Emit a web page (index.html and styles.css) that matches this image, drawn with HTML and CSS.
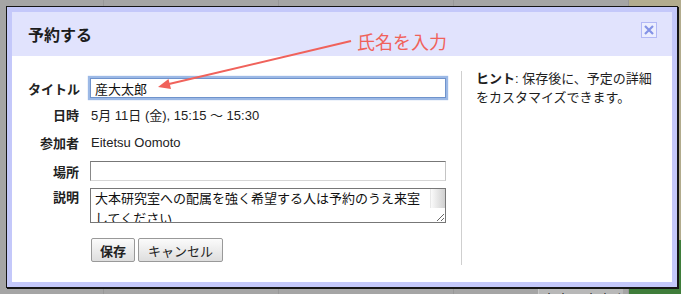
FILE: index.html
```html
<!DOCTYPE html>
<html lang="ja">
<head>
    <meta charset="UTF-8">
    <title>予約する</title>
    <link rel="stylesheet" href="styles.css">
</head>
<body>
    <div class="calendar">
        <div class="col col-first"></div>
        <div class="col"></div>
        <div class="col"></div>
        <div class="col">
            <div class="event">大本研究室説明会</div>
        </div>
        <div class="col col-last">
            <div class="event-green"></div>
        </div>
    </div>

    <div class="dialog">
        <div class="dialog-head">
            <h1 class="dialog-title">予約する</h1>
            <span class="close">
                <svg width="14" height="14" viewBox="0 0 14 14">
                    <path d="M3 3 L11 11 M11 3 L3 11" stroke="#8493e6" stroke-width="2.2" fill="none"/>
                </svg>
            </span>
        </div>
        <div class="dialog-body">
            <form class="form">
                <div class="rows">
                    <label class="label" for="title">タイトル</label>
                    <input class="field is-focus" id="title" type="text" value="産大太郎">

                    <span class="label">日時</span>
                    <span class="value">5月 11日 (金), 15:15 〜 15:30</span>

                    <span class="label">参加者</span>
                    <span class="value">Eitetsu Oomoto</span>

                    <label class="label" for="place">場所</label>
                    <input class="field" id="place" type="text">

                    <label class="label label-top" for="desc">説明</label>
                    <div class="memo-wrap">
                        <textarea class="field memo" id="desc">大本研究室への配属を強く希望する人は予約のうえ来室してください</textarea>
                    </div>
                </div>
                <div class="buttons">
                    <button type="button" class="btn btn-save">保存</button>
                    <button type="button" class="btn">キャンセル</button>
                </div>
            </form>
            <div class="hint">
                <p><b>ヒント</b>: 保存後に、予定の詳細をカスタマイズできます。</p>
            </div>
        </div>

        <!-- 注釈 -->
        <div class="note">氏名を入力</div>
        <svg class="arrow" width="210" height="60" viewBox="0 0 210 60">
            <line x1="201" y1="7" x2="19" y2="50" stroke="#f0625b" stroke-width="2"/>
            <polygon points="8,53 21,55 18.5,45" fill="#f0625b"/>
        </svg>
    </div>
</body>
</html>
```

FILE: styles.css
```css
body {
    margin: 0;
    font-family: "Liberation Sans", "Noto Sans CJK JP", sans-serif;
    font-size: 13px;
    color: #222;
    background-color: #a5a5a5;
    overflow: hidden;
}
.calendar {
    display: flex;
    height: 294px;
}
.col {
    width: 174px;
    border-right: 1px solid #989898;
    display: flex;
    flex-direction: column;
}
.col-first {
    width: 103px;
}
.col-last {
    flex: 1;
    border-right: none;
    background-color: #b2ac8e;
}
.event {
    margin: 287px 0 0 84px;
    width: 85px;
    height: 20px;
    box-sizing: border-box;
    padding: 2px 3px;
    background-color: #b8b8b8;
    border-left: 1px solid #c8c8c8;
    color: #2a2a2a;
    font-size: 14px;
    white-space: nowrap;
    overflow: hidden;
}
.event-green {
    margin-top: 240px;
    flex: 1;
    background-color: #3f7d3a;
}
.dialog {
    position: absolute;
    left: 6px;
    top: 6px;
    width: 660px;
    height: 270px;
    padding: 5px;
    background-color: #c4c8fa;
    border: 1px solid #151515;
    box-shadow: 1px 1px 0 #151515;
}
.dialog-head {
    display: flex;
    justify-content: space-between;
    align-items: center;
    height: 44px;
    padding: 0 15px 0 16px;
    background-color: #e1e3fd;
}
.dialog-title {
    margin: 0;
    font-size: 16px;
    font-weight: bold;
    color: #1c1c1c;
}
.close {
    align-self: flex-start;
    margin-top: 10px;
    width: 14px;
    height: 14px;
    display: flex;
    border: 1px solid #b3b9f5;
    background-color: #eceefe;
}
.dialog-body {
    display: flex;
    align-items: flex-start;
    height: 226px;
    background-color: #fff;
}
.form {
    width: 433px;
    padding: 20px 0 0 16px;
}
.rows {
    display: grid;
    grid-template-columns: 51px 356px;
    grid-template-rows: 24px 28px 28px 30px 39px;
    column-gap: 11px;
    align-items: center;
}
.label {
    text-align: right;
    font-weight: bold;
    color: #222;
    white-space: nowrap;
}
.label-top {
    align-self: start;
    padding-top: 4px;
    line-height: 16px;
}
.value {
    padding-left: 1px;
}
.field {
    width: 356px;
    height: 20px;
    box-sizing: border-box;
    margin: 0;
    padding: 1px 4px;
    border: 1px solid #8d8d8d;
    border-top-color: #777;
    border-left-color: #888;
    border-right-color: #c4c4c4;
    border-bottom-color: #d6d6d6;
    font-family: inherit;
    font-size: 13px;
    color: #111;
    background-color: #fff;
    outline: none;
}
.field.is-focus {
    border: 1px solid #6f93cc;
    box-shadow: 0 0 1px 2px #9cb9e6;
}
.memo-wrap {
    position: relative;
    align-self: start;
    margin-top: 2px;
    height: 35px;
}
/* スクロールバーのつまみ */
.memo-wrap::after {
    content: "";
    position: absolute;
    right: 1px;
    top: 1px;
    width: 14px;
    height: 19px;
    background: linear-gradient(to right, #fafafa, #d0d0d0);
    border-left: 1px solid #e8e8e8;
}
.memo {
    display: block;
    height: 35px;
    padding: 0 17px 0 4px;
    line-height: 20px;
    font-size: 13px;
    border-color: #777;
    overflow: hidden;
    resize: both;
}
.buttons {
    display: flex;
    gap: 3px;
    margin: 13px 0 0 63px;
}
.btn {
    height: 24px;
    padding: 0 9px;
    font-family: inherit;
    font-size: 13px;
    color: #222;
    border: 1px solid #999;
    border-radius: 2px;
    background: linear-gradient(#fbfbfb, #dedede);
}
.btn-save {
    width: 44px;
    padding: 0;
    font-weight: bold;
}
.hint {
    margin-top: 15px;
    height: 194px;
    width: 180px;
    padding-left: 14px;
    border-left: 1px solid #cfcfcf;
}
.hint p {
    margin: -2px 0 0;
    line-height: 19px;
    color: #1e1e1e;
}
.note {
    position: absolute;
    left: 350px;
    top: 25px;
    font-family: "Noto Sans CJK JP", sans-serif;
    font-size: 18px;
    line-height: 18px;
    color: #f0625b;
}
.arrow {
    position: absolute;
    left: 143px;
    top: 27px;
}
```
